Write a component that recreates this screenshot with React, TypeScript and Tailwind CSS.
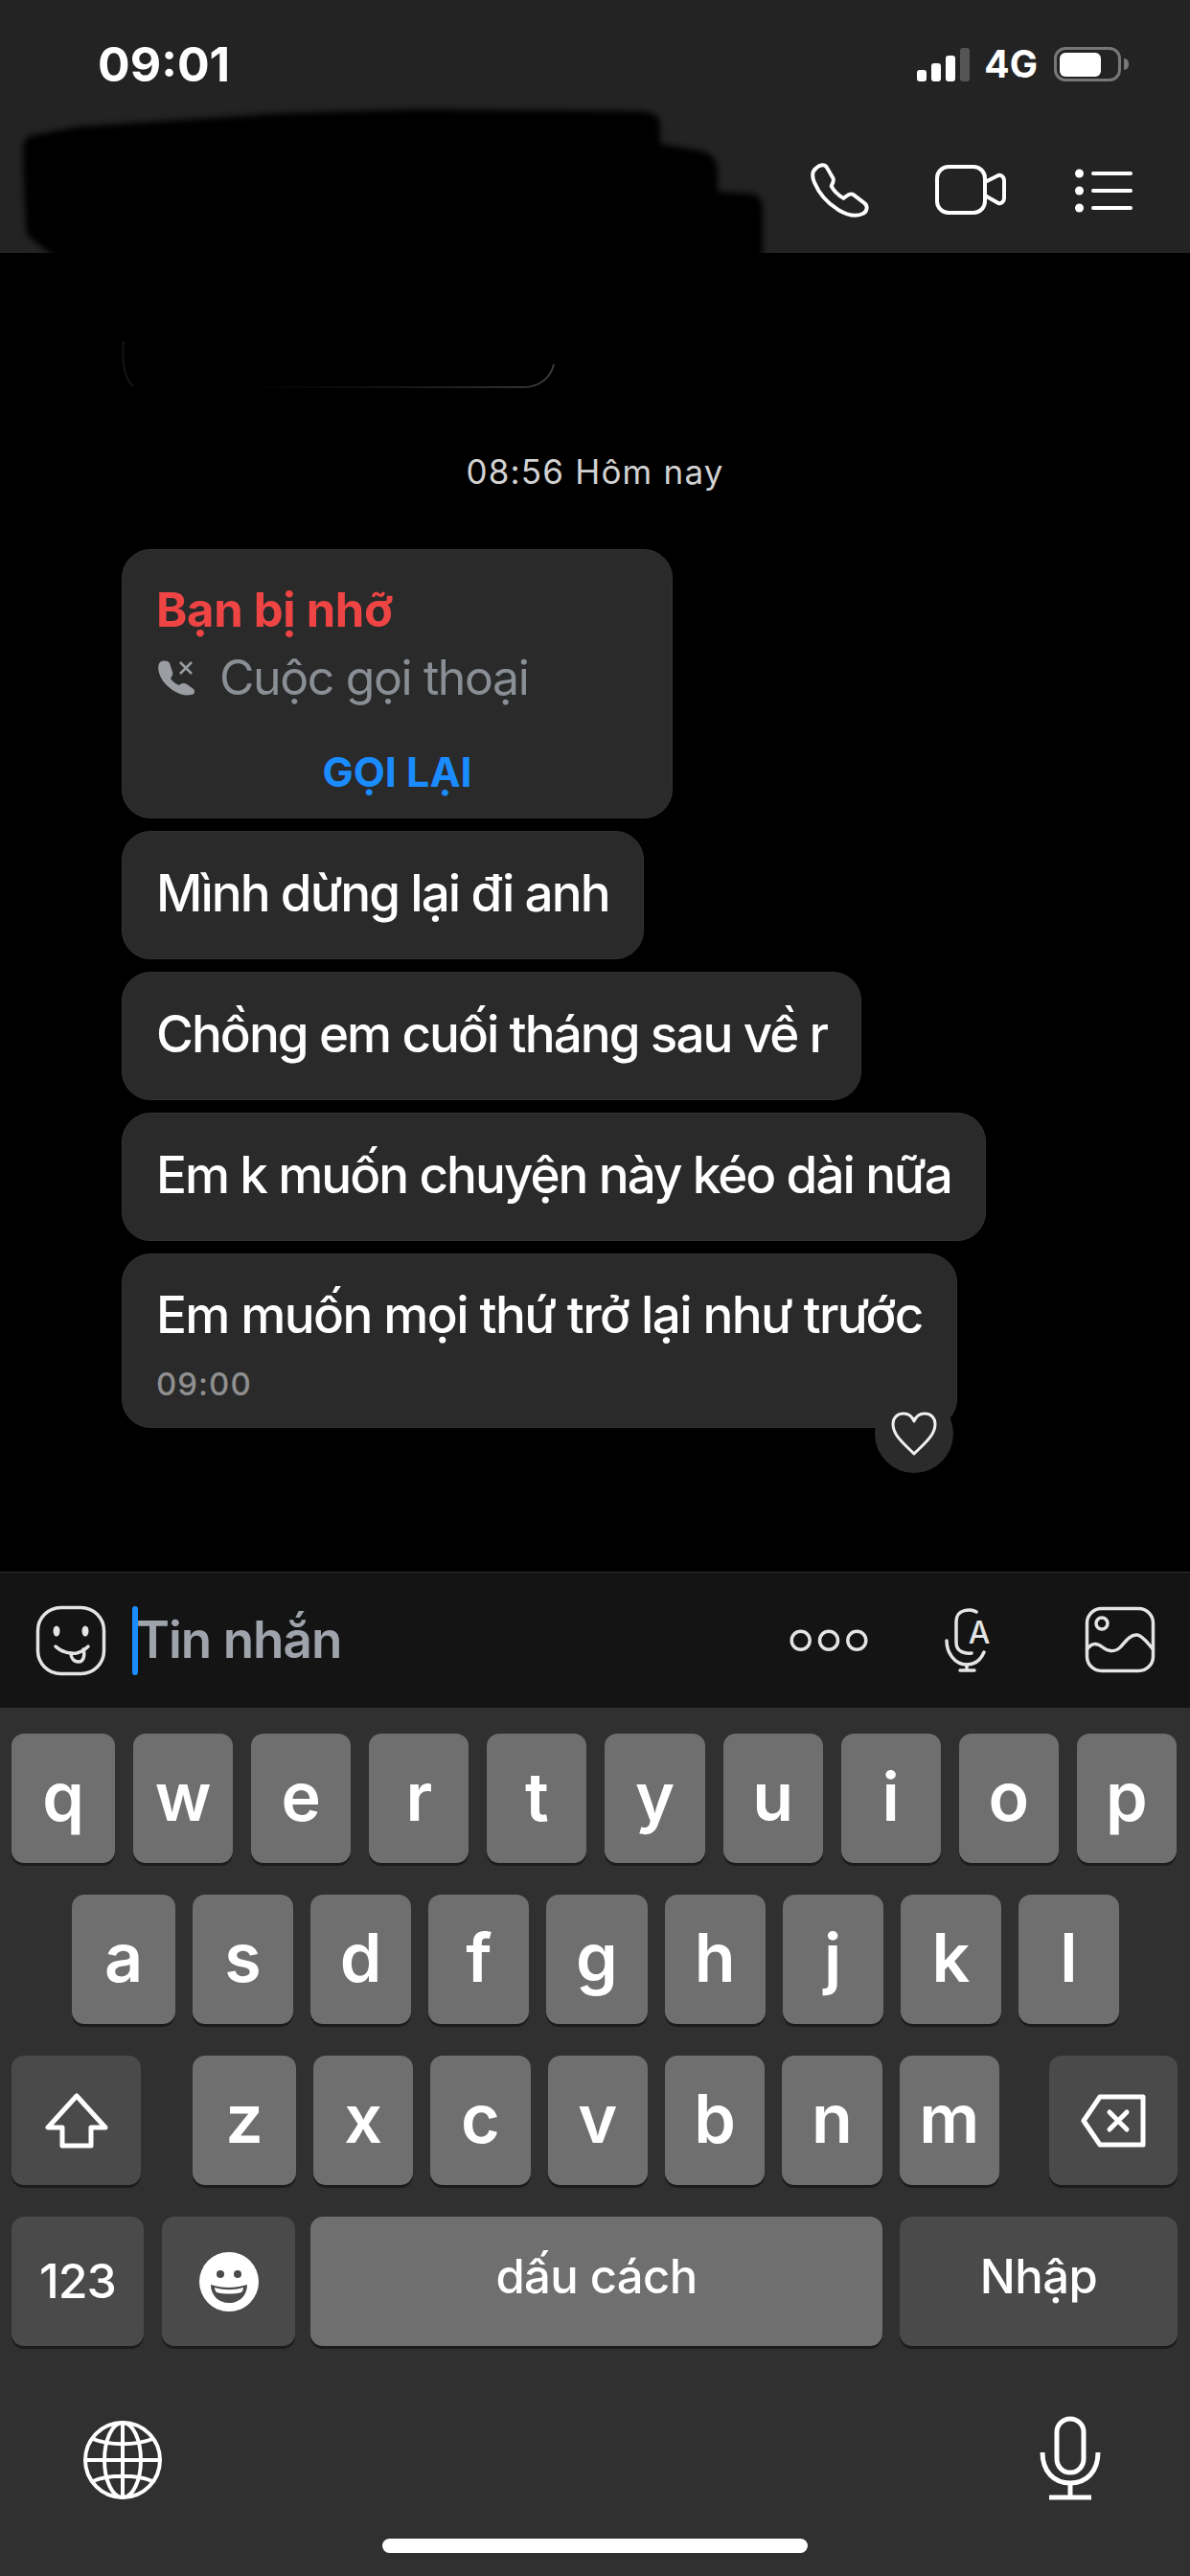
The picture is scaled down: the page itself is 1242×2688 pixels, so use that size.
import React from 'react';

const row1 = ['q', 'w', 'e', 'r', 't', 'y', 'u', 'i', 'o', 'p'];
const row2 = ['a', 's', 'd', 'f', 'g', 'h', 'j', 'k', 'l'];
const row3 = ['z', 'x', 'c', 'v', 'b', 'n', 'm'];

const messages = ['Mình dừng lại đi anh', 'Chồng em cuối tháng sau về r', 'Em k muốn chuyện này kéo dài nữa'];

const Key = ({ label }: { label: string }) => (
  <div className="flex h-[135px] flex-1 items-center justify-center rounded-[13px] bg-[#6f6f6f] pb-[4px] text-[70px] leading-none font-semibold text-white shadow-[0_3px_0_#1c1c1c] first:w-[108px] first:flex-none">
    {label}
  </div>
);

const StatusBar = () => (
  <div className="flex items-center justify-between pt-[47px] pr-[64px] pl-[102px]">
    <span className="text-[50px] leading-[40px] font-bold text-white">09:01</span>
    <div className="flex items-center">
      <div className="flex h-[35px] items-end gap-[5px]">
        <span className="h-[12px] w-[10px] rounded-[3px] bg-white" />
        <span className="h-[19px] w-[10px] rounded-[3px] bg-white" />
        <span className="h-[27px] w-[10px] rounded-[3px] bg-white" />
        <span className="h-[35px] w-[10px] rounded-[3px] bg-[#555555]" />
      </div>
      <span className="ml-[15px] text-[39px] leading-[40px] font-bold text-white">4G</span>
      <div className="ml-[17px] flex h-[36px] w-[70px] items-center rounded-[12px] border-[3px] border-[#777777] pl-[3px]">
        <span className="h-[25px] w-[43px] rounded-[6px] bg-white" />
      </div>
      <span className="ml-[3px] h-[12px] w-[5px] rounded-r-full bg-[#777777]" />
    </div>
  </div>
);

const PhoneIcon = () => (
  <svg width="66" height="62" viewBox="22 18 66 62" fill="none" stroke="white" strokeWidth="4" strokeLinejoin="round">
    <path d="M29 25C33 21 38 21 40 24L47 36C48 39 46 42 45 44C48 50 53 54 58 57C61 55 64 51 68 53L80 62C84 65 83 71 79 73C72 77 62 75 52 69C41 62 32 52 27 40C24 33 25 28 29 25Z" />
  </svg>
);

const VideoIcon = () => (
  <svg width="76" height="56" viewBox="75 151 76 56" fill="none" stroke="white" strokeWidth="4" strokeLinejoin="round">
    <rect x="78" y="154" width="50" height="48" rx="12" />
    <path d="M128 170L142 163C145 162 148 165 148 168V187C148 190 145 193 142 192L128 184" />
  </svg>
);

const ListIcon = () => (
  <svg width="60" height="46" viewBox="0 0 60 46" fill="white">
    <circle cx="4.5" cy="5" r="4.5" />
    <circle cx="4.5" cy="23" r="4.5" />
    <circle cx="4.5" cy="41" r="4.5" />
    <rect x="17" y="3" width="43" height="4" rx="2" />
    <rect x="17" y="21" width="43" height="4" rx="2" />
    <rect x="17" y="39" width="43" height="4" rx="2" />
  </svg>
);

const SmileyIcon = () => (
  <svg width="76" height="76" viewBox="34 24 76 76" fill="none" stroke="#e4e4e4" strokeWidth="3.5" strokeLinecap="round">
    <rect x="37.5" y="27.5" width="69" height="69" rx="24" />
    <ellipse cx="57" cy="52" rx="3.5" ry="5.5" fill="#e4e4e4" stroke="none" />
    <ellipse cx="87" cy="52" rx="3.5" ry="5.5" fill="#e4e4e4" stroke="none" />
    <path d="M56 68C62 74 72 76 78 75C82 74 86 72 90 68" />
    <path d="M72 75C72 80 75 84 80 84C85 84 87 78 85 71" />
  </svg>
);

const DotsIcon = () => (
  <svg width="84" height="26" viewBox="23 49 84 26" fill="none" stroke="#e4e4e4" strokeWidth="3.5">
    <circle cx="34.7" cy="61.7" r="9.5" />
    <circle cx="64" cy="61.7" r="9.5" />
    <circle cx="93.3" cy="61.7" r="9.5" />
  </svg>
);

const MicAIcon = () => (
  <svg width="52" height="68" viewBox="185 29 52 68" fill="none" stroke="#e4e4e4" strokeWidth="3.5" strokeLinecap="round">
    <path d="M218 33C213 30 197 29 197 43V65C197 75 207 77 213 76" />
    <path d="M187 63C187 75 195 88 208 88C218 88 223 82 226 75" />
    <path d="M208 88V94M201 94H216" />
    <text x="221" y="66" fontSize="32" fontWeight="500" textAnchor="middle" fill="#e4e4e4" stroke="none">A</text>
  </svg>
);

const ImageIcon = () => (
  <svg width="74" height="72" viewBox="329 27 74 72" fill="none" stroke="#e4e4e4" strokeWidth="3.5" strokeLinecap="round">
    <rect x="331.5" y="29.5" width="69" height="65" rx="15" />
    <circle cx="347" cy="45" r="6" />
    <path d="M331.5 72C337 64 343 66 348 70C354 75 362 75 367 69C373 62 378 56 384 57C390 58 395 66 400.5 72" />
  </svg>
);

const MissedCallIcon = () => (
  <svg width="42" height="40" viewBox="15 7 42 40">
    <path fill="#9a9da1" d="M19 11C22 9 27 9 29 12L32 21C33 24 31 26 30 28C33 32 36 34 39 35C41 33 44 32 47 34L54 39C56 42 55 45 51 45C42 47 31 41 24 33C18 26 15 15 19 11Z" />
    <path stroke="#9a9da1" strokeWidth="2.5" d="M40 11L52 23M52 11L40 23" />
  </svg>
);

const HeartIcon = () => (
  <svg width="48" height="46" viewBox="0 0 48 46" fill="none" stroke="#f0f0f0" strokeWidth="3" strokeLinejoin="round">
    <path d="M24 44C14 34 2 25 2 13C2 6 7 2 13 2C18 2 22 5 24 10C26 5 30 2 35 2C41 2 46 6 46 13C46 25 34 34 24 44Z" />
  </svg>
);

const ShiftIcon = () => (
  <svg width="66" height="58" viewBox="0 0 66 58" fill="none" stroke="white" strokeWidth="5" strokeLinejoin="round">
    <path d="M33 3L3 36H18V55H48V36H63Z" />
  </svg>
);

const DeleteIcon = () => (
  <svg width="68" height="56" viewBox="0 0 68 56" fill="none" stroke="white" strokeWidth="5" strokeLinejoin="round" strokeLinecap="round">
    <path d="M3 28L20 3H65V53H20Z" />
    <path d="M30 19L48 37M48 19L30 37" />
  </svg>
);

const EmojiIcon = () => (
  <svg width="62" height="62" viewBox="0 0 62 62">
    <circle cx="31" cy="31" r="31" fill="white" />
    <circle cx="22" cy="23" r="4" fill="#4a4a4a" />
    <circle cx="40" cy="23" r="4" fill="#4a4a4a" />
    <path fill="#4a4a4a" d="M12 34C24 38 38 38 50 34C50 45 42 53 31 53C20 53 12 45 12 34Z" />
    <path fill="white" d="M16 37C26 40 36 40 46 37C46 39 45 41 44 42C36 44 26 44 18 42C17 41 16 39 16 37Z" />
  </svg>
);

const GlobeIcon = () => (
  <svg width="84" height="84" viewBox="0 0 84 84" fill="none" stroke="white" strokeWidth="4">
    <circle cx="42" cy="42" r="39" />
    <ellipse cx="42" cy="42" rx="19" ry="39" />
    <path d="M42 3V81M3 42H81M11 20C28 27 56 27 73 20M11 64C28 57 56 57 73 64" />
  </svg>
);

const MicIcon = () => (
  <svg width="64" height="88" viewBox="0 0 64 88" fill="none" stroke="white" strokeWidth="5" strokeLinecap="butt">
    <rect x="18" y="3" width="28" height="56" rx="14" />
    <path d="M3 38C3 58 15 70 32 70C49 70 61 58 61 38" />
    <path d="M32 70V85M10 85H54" />
  </svg>
);

const Bubble = ({ text }: { text: string }) => (
  <div className="flex h-[134px] w-fit items-center rounded-[30px] border border-[#333333] bg-[#2a2a2a] px-[35px] pb-[4px] text-[53px] leading-none font-medium tracking-[-1.95px] text-white">
    {text}
  </div>
);

export default function App() {
  return (
    <div className="flex h-[2688px] w-[1242px] flex-col overflow-hidden bg-black font-['Inter','Noto_Sans',sans-serif]">
      {/* header, the name is scribbled out in the screenshot */}
      <div className="relative h-[264px] shrink-0 bg-[#232323]">
        <StatusBar />
        <div className="mt-[81px] flex items-center pr-[60px] pl-[845px]">
          <PhoneIcon />
          <div className="ml-[65px]"><VideoIcon /></div>
          <div className="ml-[71px]"><ListIcon /></div>
        </div>
        <svg className="absolute top-0 left-0 blur-[3px]" width="800" height="270" viewBox="0 0 800 270">
          <path fill="#000" d="M24 150L30 142L83 132L300 118L436 114L670 116Q689 118 689 130V150L735 158Q749 164 749 180V200L785 202Q796 204 796 220V270H59L28 245Q24 200 24 150Z" />
        </svg>
      </div>

      <div className="flex min-h-0 flex-1 flex-col pl-[127px]">
        <svg className="mt-[84px] shrink-0" width="460" height="60" viewBox="0 0 460 60" fill="none">
          <defs>
            <linearGradient id="edge" x1="0" x2="1" y1="0" y2="0">
              <stop offset="0.15" stopColor="#111111" stopOpacity="0" />
              <stop offset="1" stopColor="#3a3a3a" />
            </linearGradient>
          </defs>
          <path stroke="#141414" strokeWidth="2" d="M2 8C0 30 2 46 12 55" />
          <path stroke="url(#edge)" strokeWidth="2" d="M40 56H420C436 56 448 46 451 32" />
        </svg>
        <div className="mt-[64px] -ml-[127px] text-center text-[35px] leading-[40px] tracking-[1.2px] text-[#d2d2d2]">08:56 Hôm nay</div>

        <div className="mt-[61px] flex flex-col gap-[13px]">
          <div className="h-[281px] w-[575px] rounded-[30px] border border-[#333333] bg-[#2a2a2a] px-[35px] pt-[36px]">
            <div className="text-[49px] leading-[54px] font-bold tracking-[-0.3px] text-[#ef4444]">Bạn bị nhỡ</div>
            <div className="mt-[15px] flex items-center gap-[24px] text-[50px] leading-[56px] tracking-[-1.4px] text-[#8a8f96]">
              <MissedCallIcon />
              Cuộc gọi thoại
            </div>
            <div className="mt-[48px] text-center text-[43px] leading-[44px] font-bold text-[#1a8cff]">GỌI LẠI</div>
          </div>
          {messages.map((m) => (
            <Bubble key={m} text={m} />
          ))}
          <div className="relative h-[182px] w-fit rounded-[30px] border border-[#333333] bg-[#2a2a2a] px-[35px] pt-[33px]">
            <div className="text-[53px] leading-[60px] font-medium tracking-[-1.6px] whitespace-nowrap text-white">Em muốn mọi thứ trở lại như trước</div>
            <div className="mt-[22px] text-[33px] leading-[40px] font-medium tracking-[1px] text-[#8f8f8f]">09:00</div>
            <div className="absolute right-[3px] -bottom-[48px] flex h-[82px] w-[82px] items-center justify-center rounded-full bg-[#2b2b2b]">
              <HeartIcon />
            </div>
          </div>
        </div>
      </div>

      {/* composer */}
      <div className="flex h-[142px] shrink-0 items-center border-t border-[#2e2e2e] bg-[#141414] pr-[36px] pl-[36px]">
        <SmileyIcon />
        <span className="ml-[26px] h-[72px] w-[6px] rounded-full bg-[#1a8cff]" />
        <span className="-ml-[2px] text-[53px] leading-none font-semibold tracking-[-1px] text-[#9fa4ac]">Tin nhắn</span>
        <div className="ml-auto flex items-center">
          <DotsIcon />
          <div className="ml-[78px]"><MicAIcon /></div>
          <div className="ml-[94px]"><ImageIcon /></div>
        </div>
      </div>

      {/* keyboard */}
      <div className="flex h-[906px] shrink-0 flex-col bg-[#303030] pt-[27px]">
        <div className="flex gap-[19px] pr-[14px] pl-[12px]">
          {row1.map((k) => (
            <Key key={k} label={k} />
          ))}
        </div>
        <div className="mt-[33px] flex gap-[18px] pr-[74px] pl-[75px]">
          {row2.map((k) => (
            <Key key={k} label={k} />
          ))}
        </div>
        <div className="mt-[33px] flex pr-[13px] pl-[12px]">
          <div className="flex h-[135px] w-[135px] shrink-0 items-center justify-center rounded-[13px] bg-[#4a4a4a] shadow-[0_3px_0_#1c1c1c]">
            <ShiftIcon />
          </div>
          <div className="mr-[52px] ml-[54px] flex flex-1 gap-[18px]">
            {row3.map((k) => (
              <Key key={k} label={k} />
            ))}
          </div>
          <div className="flex h-[135px] w-[134px] shrink-0 items-center justify-center rounded-[13px] bg-[#4a4a4a] shadow-[0_3px_0_#1c1c1c]">
            <DeleteIcon />
          </div>
        </div>
        <div className="mt-[33px] flex h-[135px] pr-[13px] pl-[12px] font-medium text-white">
          <div className="flex w-[138px] items-center justify-center rounded-[13px] bg-[#4a4a4a] text-[50px] tracking-[-1px] shadow-[0_3px_0_#1c1c1c]">123</div>
          <div className="ml-[19px] flex w-[139px] items-center justify-center rounded-[13px] bg-[#4a4a4a] shadow-[0_3px_0_#1c1c1c]">
            <EmojiIcon />
          </div>
          <div className="ml-[16px] flex w-[597px] items-center justify-center rounded-[13px] bg-[#6f6f6f] pb-[10px] text-[49px] tracking-[-0.6px] shadow-[0_3px_0_#1c1c1c]">dấu cách</div>
          <div className="ml-[18px] flex w-[290px] items-center justify-center rounded-[13px] bg-[#4a4a4a] pb-[10px] text-[49px] tracking-[-0.6px] shadow-[0_3px_0_#1c1c1c]">Nhập</div>
        </div>
        <div className="mt-[73px] flex items-end justify-between pr-[93px] pl-[86px]">
          <GlobeIcon />
          <MicIcon />
        </div>
        <div className="mx-auto mt-[40px] h-[15px] w-[444px] rounded-full bg-white" />
      </div>
    </div>
  );
}
